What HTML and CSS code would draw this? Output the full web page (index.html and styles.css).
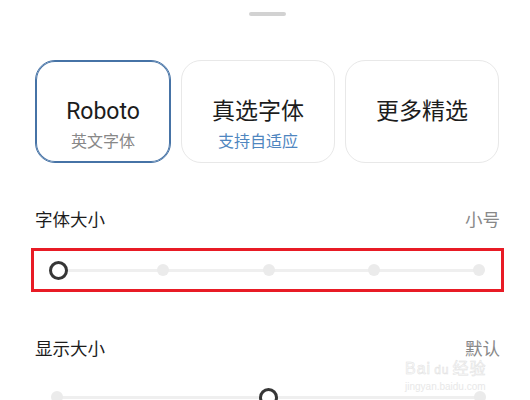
FILE: index.html
```html
<!DOCTYPE html>
<html lang="zh-CN">
<head>
    <meta charset="UTF-8">
    <meta name="viewport" content="width=device-width, initial-scale=1.0">
    <title>字体设置</title>
    <link rel="stylesheet" href="styles.css">
</head>
<body>
    <div class="sheet">
        <div class="grabber"></div>

        <!-- Font choices -->
        <div class="fonts">
            <div class="font-card active">
                <div class="font-name">Roboto</div>
                <div class="font-note">英文字体</div>
            </div>
            <div class="font-card">
                <div class="font-name">真选字体</div>
                <div class="font-note blue">支持自适应</div>
            </div>
            <div class="font-card">
                <div class="font-name">更多精选</div>
            </div>
        </div>

        <!-- Font size -->
        <div class="setting">
            <div class="setting-head">
                <span>字体大小</span>
                <span class="value">小号</span>
            </div>
            <div class="highlight">
                <div class="slider in-box">
                    <span class="stop"><i class="knob"></i></span>
                    <span class="stop"><i class="dot"></i></span>
                    <span class="stop"><i class="dot"></i></span>
                    <span class="stop"><i class="dot"></i></span>
                    <span class="stop"><i class="dot"></i></span>
                </div>
            </div>
        </div>

        <!-- Display size -->
        <div class="setting second">
            <div class="setting-head">
                <span>显示大小</span>
                <span class="value">默认</span>
            </div>
            <div class="slider">
                <span class="stop"><i class="dot"></i></span>
                <span class="stop"><i class="knob"></i></span>
                <span class="stop"><i class="dot"></i></span>
            </div>
        </div>

        <div class="watermark">
            <div class="wm-logo">Bai<span class="wm-du">du</span>经验</div>
            <div class="wm-url">jingyan.baidu.com</div>
        </div>
    </div>
</body>
</html>
```

FILE: styles.css
```css
body {
    margin: 0;
    background: #fff;
    font-family: "Roboto", "Noto Sans CJK SC", sans-serif;
    color: #1c1c1c;
}
.sheet {
    position: relative;
    width: 530px;
    height: 400px;
    overflow: hidden;
}
.grabber {
    width: 37px;
    height: 4px;
    margin: 12px auto 0;
    border-radius: 2px;
    background: #d2d2d2;
    transform: translateX(2px);
}
.fonts {
    display: grid;
    grid-template-columns: 136px 154px 154px;
    column-gap: 10px;
    margin-top: 44px;
    padding-left: 35px;
}
.font-card {
    box-sizing: border-box;
    height: 103px;
    padding-top: 36px;
    border: 1px solid #e8e8e8;
    border-radius: 20px;
    text-align: center;
}
.font-card.active {
    border-color: #4673a6;
    box-shadow: inset 0 0 0 1px #4673a6;
}
.font-name {
    font-size: 23px;
    line-height: 30px;
}
.font-note {
    margin-top: 4px;
    font-size: 16px;
    line-height: 22px;
    color: #888;
}
.font-note.blue {
    color: #4f86bf;
}
.setting {
    margin-top: 45px;
}
.setting-head {
    display: flex;
    justify-content: space-between;
    padding: 0 30px 0 35px;
    font-size: 17.5px;
    line-height: 24px;
}
.setting-head .value {
    color: #888;
}
.highlight {
    box-sizing: border-box;
    display: flex;
    align-items: center;
    height: 44px;
    margin: 16px 26px 0 31px;
    border: 3px solid #e81b25;
}
.slider {
    display: flex;
    justify-content: space-between;
    height: 20px;
    margin: 26px 40px 0 47px;
    background: linear-gradient(#efefef, #efefef) center / calc(100% - 20px) 3px no-repeat;
}
.slider.in-box {
    flex: 1;
    margin: 0 12px 0 14px;
}
.stop {
    display: flex;
    align-items: center;
    justify-content: center;
    width: 20px;
    height: 20px;
}
.dot {
    width: 12px;
    height: 12px;
    border-radius: 50%;
    background: #ebebeb;
}
.knob {
    box-sizing: border-box;
    width: 19px;
    height: 19px;
    border: 3.5px solid #363636;
    border-radius: 50%;
    background: #fff;
}
.watermark {
    position: absolute;
    left: 405px;
    top: 361px;
    width: 96px;
    color: #fafafa;
    -webkit-text-stroke: 0.5px #e2e2e2;
    font-family: "Liberation Sans", "Noto Sans CJK SC", sans-serif;
}
.wm-logo {
    font-size: 16px;
    line-height: 16px;
    letter-spacing: 1px;
}
.wm-du {
    font-size: 12px;
    margin: 0 3px;
}
.wm-url {
    font-size: 10px;
    line-height: 12px;
    margin-top: 3px;
    -webkit-text-stroke: 0;
    color: #e8e8e8;
}
```
